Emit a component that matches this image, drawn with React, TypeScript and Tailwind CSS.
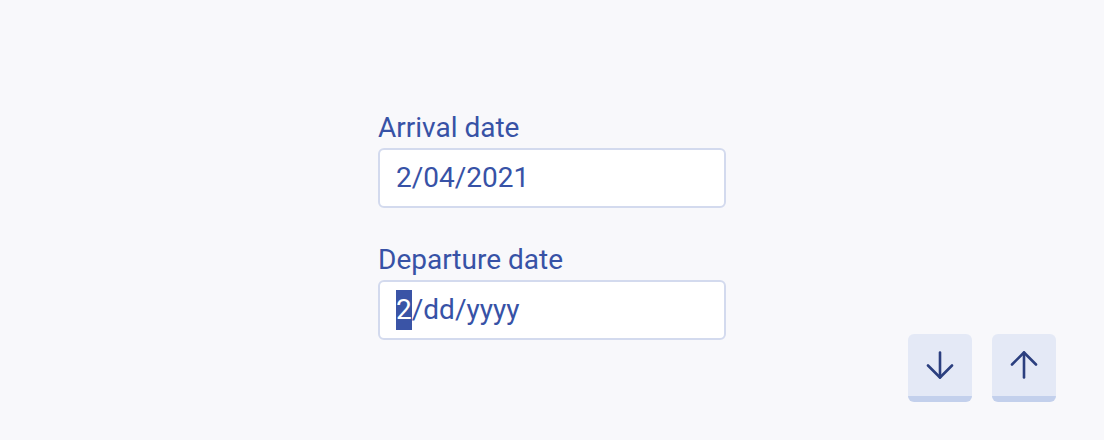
import React from "react";

function DateField({ label, children }: { label: string; children: React.ReactNode }) {
  return (
    <div className="flex flex-col">
      <label className="text-[28px] leading-[32px] text-[#3752a6] mb-1">{label}</label>
      <div className="h-[60px] w-[348px] rounded-md border-2 border-[#d3daee] bg-white pl-4 flex items-center text-[28px] text-[#3752a6]">
        {children}
      </div>
    </div>
  );
}

function Arrow({ up }: { up?: boolean }) {
  return (
    <svg width="28" height="28" viewBox="0 0 28 28" fill="none" stroke="#2b3f7f" strokeWidth="2.6" strokeLinecap="round" strokeLinejoin="round" className={up ? "rotate-180" : ""}>
      <line x1="14" y1="1.5" x2="14" y2="26.5" />
      <polyline points="2,14.5 14,26.5 26,14.5" />
    </svg>
  );
}

function KeyButton({ up }: { up?: boolean }) {
  return (
    <button className="h-[68px] w-16 rounded-md bg-[#e4e9f6] border-b-[6px] border-[#c3d0ec] flex items-center justify-center">
      <Arrow up={up} />
    </button>
  );
}

export default function App() {
  return (
    <div className="relative h-[440px] w-full bg-[#f8f8fb] font-['Roboto',sans-serif]">
      <div className="flex flex-col items-center pt-[112px] gap-[36px]">
        <DateField label="Arrival date">
          <span>2/04/2021</span>
        </DateField>
        <DateField label="Departure date">
          <span className="inline-flex h-[40px] items-center bg-[#3a54a6] text-white">2</span>
          <span>/dd/yyyy</span>
        </DateField>
      </div>
      <div className="absolute right-[48px] bottom-[38px] flex gap-5">
        <KeyButton />
        <KeyButton up />
      </div>
    </div>
  );
}
